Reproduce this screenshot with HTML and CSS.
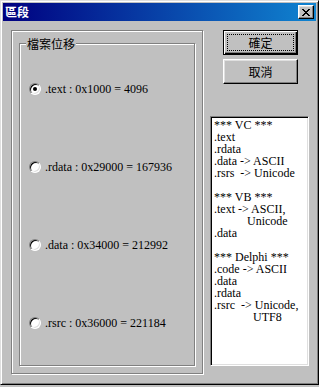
FILE: index.html
```html
<!DOCTYPE html>
<html>
<head>
    <meta charset="UTF-8">
    <title>區段</title>
    <link rel="stylesheet" href="styles.css">
</head>
<body>
    <div class="window">
        <div class="title-bar">
            <span class="title">區段</span>
            <button class="close">
                <svg width="8" height="7" viewBox="0 0 8 7" shape-rendering="crispEdges">
                    <path d="M0 0h2v1H0zM6 0h2v1H6zM1 1h2v1H1zM5 1h2v1H5zM2 2h4v1H2zM3 3h2v1H3zM2 4h4v1H2zM1 5h2v1H1zM5 5h2v1H5zM0 6h2v1H0zM6 6h2v1H6z" fill="#000"/>
                </svg>
            </button>
        </div>
        <div class="content">
            <div class="panel">
                <div class="group">
                    <span class="legend">檔案位移</span>
                    <label class="radio-row"><span class="radio checked"></span><span class="radio-text">.text : 0x1000 = 4096</span></label>
                    <label class="radio-row"><span class="radio"></span><span class="radio-text">.rdata : 0x29000 = 167936</span></label>
                    <label class="radio-row"><span class="radio"></span><span class="radio-text">.data : 0x34000 = 212992</span></label>
                    <label class="radio-row"><span class="radio"></span><span class="radio-text">.rsrc : 0x36000 = 221184</span></label>
                </div>
            </div>
            <div class="side">
                <button class="btn btn-default"><span class="focus">確定</span></button>
                <button class="btn">取消</button>
<pre class="memo">*** VC ***
.text
.rdata
.data -&gt; ASCII
.rsrs  -&gt; Unicode

*** VB ***
.text -&gt; ASCII,
           Unicode
.data

*** Delphi ***
.code -&gt; ASCII
.data
.rdata
.rsrc  -&gt; Unicode,
             UTF8</pre>
            </div>
        </div>
    </div>
</body>
</html>
```

FILE: styles.css
```css
* {
  margin: 0px;
  padding: 0px;
  box-sizing: border-box;
}
html, body {
  background: #c0c0c0;
}
.window {
  width: 319px;
  height: 385px;
  padding: 2px;
  background: #c0c0c0;
  border: 1px solid;
  border-color: #dfdfdf #000 #000 #dfdfdf;
  box-shadow: inset 1px 1px #fff, inset -1px -1px #808080;
  font-family: "Noto Sans CJK TC", "Liberation Sans", sans-serif;
  font-size: 12px;
}
.title-bar {
  height: 18px;
  display: flex;
  align-items: center;
  justify-content: space-between;
  padding: 0px 2px 0px 2px;
  background: linear-gradient(to right, #000080, #1084d0);
}
.title {
  color: #fff;
  font-weight: bold;
  font-size: 12px;
  line-height: 14px;
}
.close {
  width: 16px;
  height: 14px;
  display: flex;
  align-items: center;
  justify-content: center;
  background: #c0c0c0;
  border: 1px solid;
  border-color: #fff #000 #000 #fff;
  box-shadow: inset -1px -1px #808080, inset 1px 1px #dfdfdf;
  padding-top: 1px;
}
.close svg {
  display: block;
}
.content {
  display: flex;
  gap: 7px;
  padding: 9px 0px 0px 8px;
}
.panel {
  width: 192px;
  height: 344px;
  padding: 12px 7px 7px 7px;
  border: 1px solid #808080;
  box-shadow: inset 1px 1px #fff, 1px 1px #fff;
}
.group {
  position: relative;
  height: 100%;
  display: flex;
  flex-direction: column;
  gap: 66px;
  padding: 39px 0px 0px 9px;
  border: 1px solid #808080;
  box-shadow: inset 1px 1px #fff, 1px 1px #fff;
}
.legend {
  position: absolute;
  left: 6px;
  top: -7px;
  padding: 0px 1px;
  background: #c0c0c0;
  font-size: 12px;
  line-height: 13px;
  color: #000;
}
.radio-row {
  display: flex;
  align-items: center;
  gap: 4px;
  height: 12px;
}
.radio {
  position: relative;
  width: 12px;
  height: 12px;
  flex: none;
  border-radius: 50%;
  background: #fff;
  border: 1px solid;
  border-color: #808080 #fff #fff #808080;
  box-shadow: inset 1px 1px #000, inset -1px -1px #dfdfdf;
}
.radio.checked::after {
  content: '';
  position: absolute;
  left: 3px;
  top: 3px;
  width: 4px;
  height: 4px;
  border-radius: 50%;
  background: #000;
}
.radio-text {
  font-family: "Liberation Serif", serif;
  font-size: 12px;
  line-height: 12px;
  color: #000;
  white-space: nowrap;
}
.side {
  width: 99px;
  display: flex;
  flex-direction: column;
  gap: 4px;
}
.btn {
  width: 75px;
  height: 25px;
  margin-left: 13px;
  display: flex;
  align-items: center;
  justify-content: center;
  background: #c0c0c0;
  border: 1px solid;
  border-color: #fff #000 #000 #fff;
  box-shadow: inset -1px -1px #808080, inset 1px 1px #dfdfdf;
  font-family: "Noto Sans CJK TC", "Liberation Sans", sans-serif;
  font-size: 12px;
  line-height: 14px;
  color: #000;
}
.btn-default {
  border: 1px solid #000;
  box-shadow: inset 1px 1px #fff, inset -1px -1px #000, inset -2px -2px #808080;
  padding: 3px;
}
.focus {
  display: flex;
  align-items: center;
  justify-content: center;
  width: 100%;
  height: 100%;
  border: 1px dotted #000;
}
.memo {
  margin-top: 28px;
  width: 99px;
  height: 250px;
  padding: 2px 3px 0px 3px;
  background: #fff;
  border: 1px solid;
  border-color: #808080 #fff #fff #808080;
  box-shadow: inset 1px 1px #000, inset -1px -1px #dfdfdf;
  font-family: "Liberation Serif", serif;
  font-size: 12px;
  line-height: 12px;
  color: #000;
  overflow: hidden;
}
```
